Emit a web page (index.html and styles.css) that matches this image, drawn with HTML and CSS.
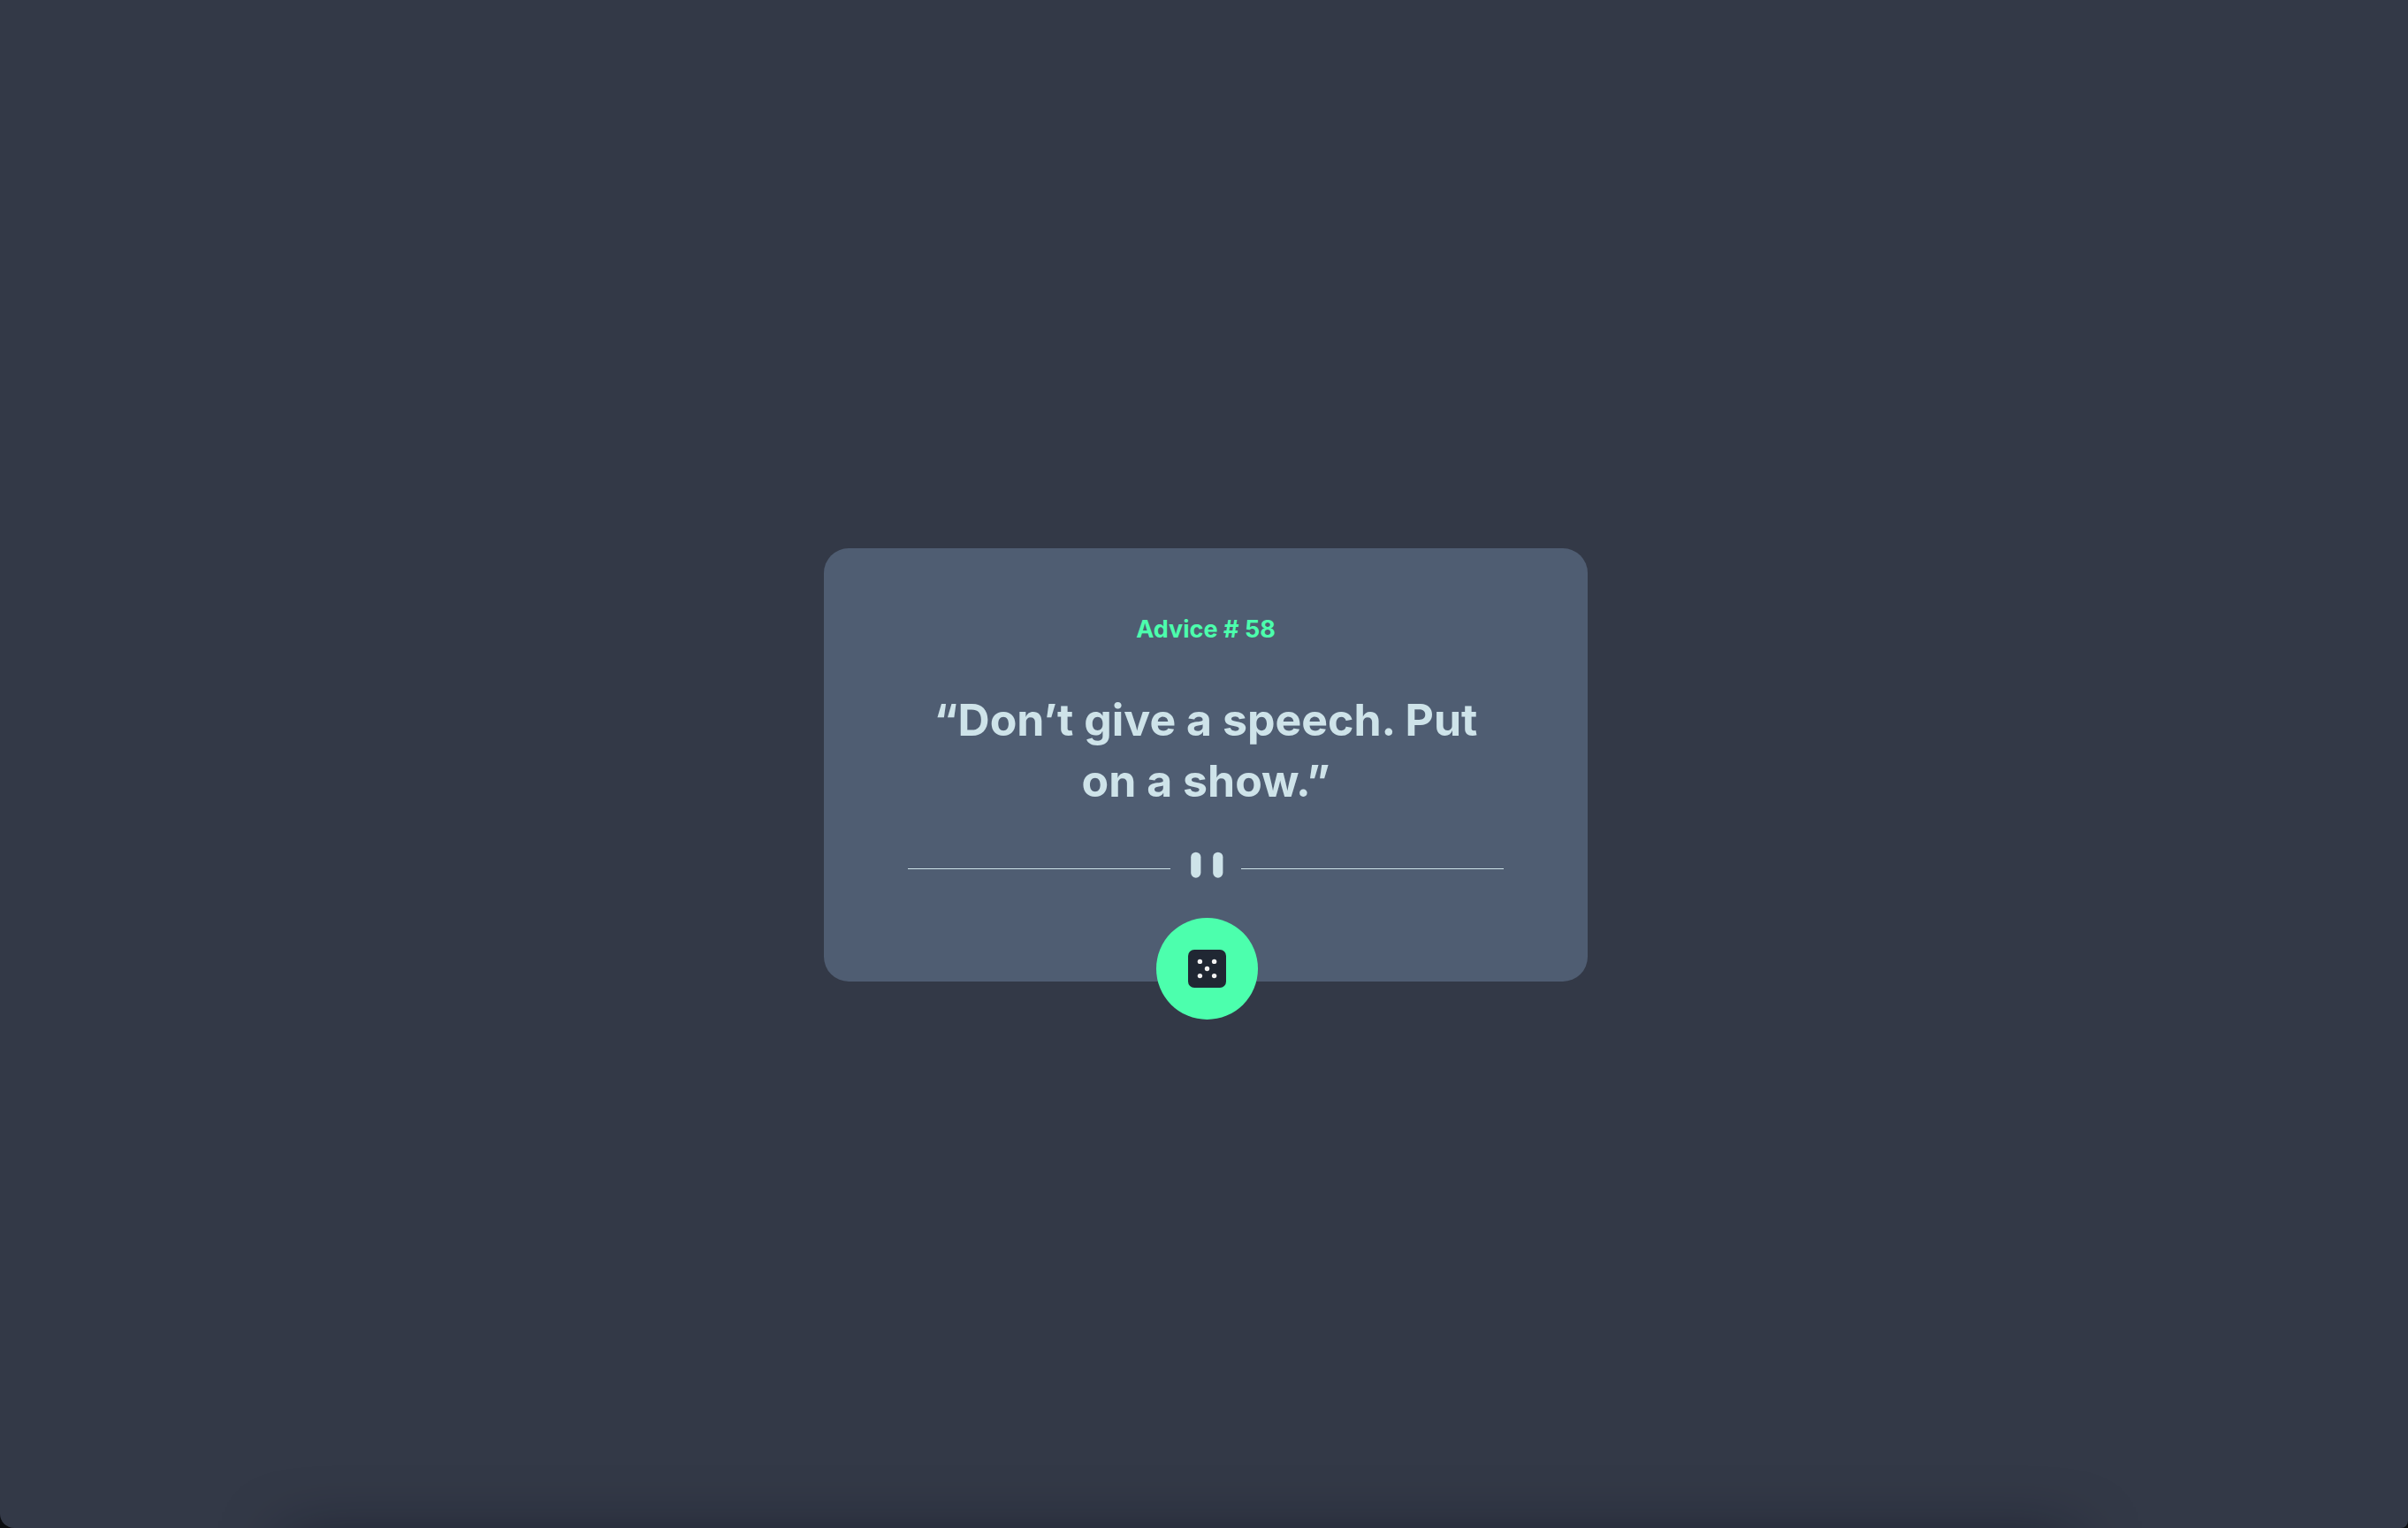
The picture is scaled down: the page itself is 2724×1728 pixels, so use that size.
FILE: index.html
```html
<!DOCTYPE html>
<html lang="en">
<head>
  <meta charset="utf-8">
  <meta name="viewport" content="width=device-width, initial-scale=1">
  <title>Advice generator</title>
  <link rel="stylesheet" href="styles.css">
</head>
<body>
  <main class="page">
    <article class="card">
      <h1 class="advice-id">Advice # 58</h1>
      <blockquote class="quote">“Don’t give a speech. Put on a show.”</blockquote>
      <div class="divider">
        <span class="rule"></span>
        <svg class="pause" viewBox="0 0 38 30" aria-hidden="true">
          <rect x="2.2" y="0.7" width="11.2" height="29" rx="5.6"/>
          <rect x="27.2" y="0.7" width="11.2" height="29" rx="5.6"/>
        </svg>
        <span class="rule"></span>
      </div>
      <button class="dice-button" type="button" aria-label="New advice">
        <svg class="dice" viewBox="0 0 43 43" aria-hidden="true">
          <rect class="dice-face" width="43" height="43" rx="7"/>
          <g class="dice-dots">
            <circle cx="13.4" cy="13.4" r="2.7"/>
            <circle cx="29.6" cy="13.4" r="2.7"/>
            <circle cx="21.5" cy="21.5" r="2.7"/>
            <circle cx="13.4" cy="29.6" r="2.7"/>
            <circle cx="29.6" cy="29.6" r="2.7"/>
          </g>
        </svg>
      </button>
    </article>
  </main>
</body>
</html>
```
FILE: styles.css
```css
* {
  box-sizing: border-box;
}

html {
  background: #0b0d10;
}

body {
  margin: 0;
  font-family: Inter, "Liberation Sans", sans-serif;
  font-weight: 700;
}

.page {
  position: relative;
  display: flex;
  align-items: center;
  justify-content: center;
  min-height: 100vh;
  padding: 2px 0 0 4px;
  overflow: hidden;
  border-radius: 0 0 8px 16px;
  background: #333947;
}

/* Soft shade rising from the bottom edge */
.page::after {
  content: "";
  position: absolute;
  top: 100%;
  left: 12%;
  right: 14%;
  height: 80px;
  box-shadow: 0 16px 72px rgb(10 14 28 / 60%);
}

.card {
  display: flex;
  flex-direction: column;
  align-items: center;
  width: 100%;
  max-width: 864px;
  padding: 73px 95px 0;
  border-radius: 28px;
  background: #4f5d72;
  text-align: center;
}

.advice-id {
  margin: 0;
  color: #4cffad;
  font-size: 27px;
  line-height: 38px;
}

.quote {
  margin: 49px 0 45px;
  color: #cee3e9;
  font-size: 50px;
  line-height: 69px;
}

.divider {
  display: grid;
  grid-template-columns: 1fr 80px 1fr;
  align-items: center;
  justify-items: center;
  width: 100%;
}

.rule {
  width: 100%;
  height: 1px;
  margin-top: 8px;
  background: #cee3e9;
}

.pause {
  width: 38px;
  height: 30px;
  fill: #cee3e9;
  overflow: visible;
}

.dice-button {
  display: grid;
  place-items: center;
  width: 115px;
  height: 115px;
  margin: 45px 0 -43px 2px;
  padding: 0;
  border: 0;
  border-radius: 50%;
  background: #4cffad;
  cursor: pointer;
}

.dice {
  width: 43px;
  height: 43px;
}

.dice-face {
  fill: #202733;
}

.dice-dots {
  fill: #f2f2f2;
}
```
